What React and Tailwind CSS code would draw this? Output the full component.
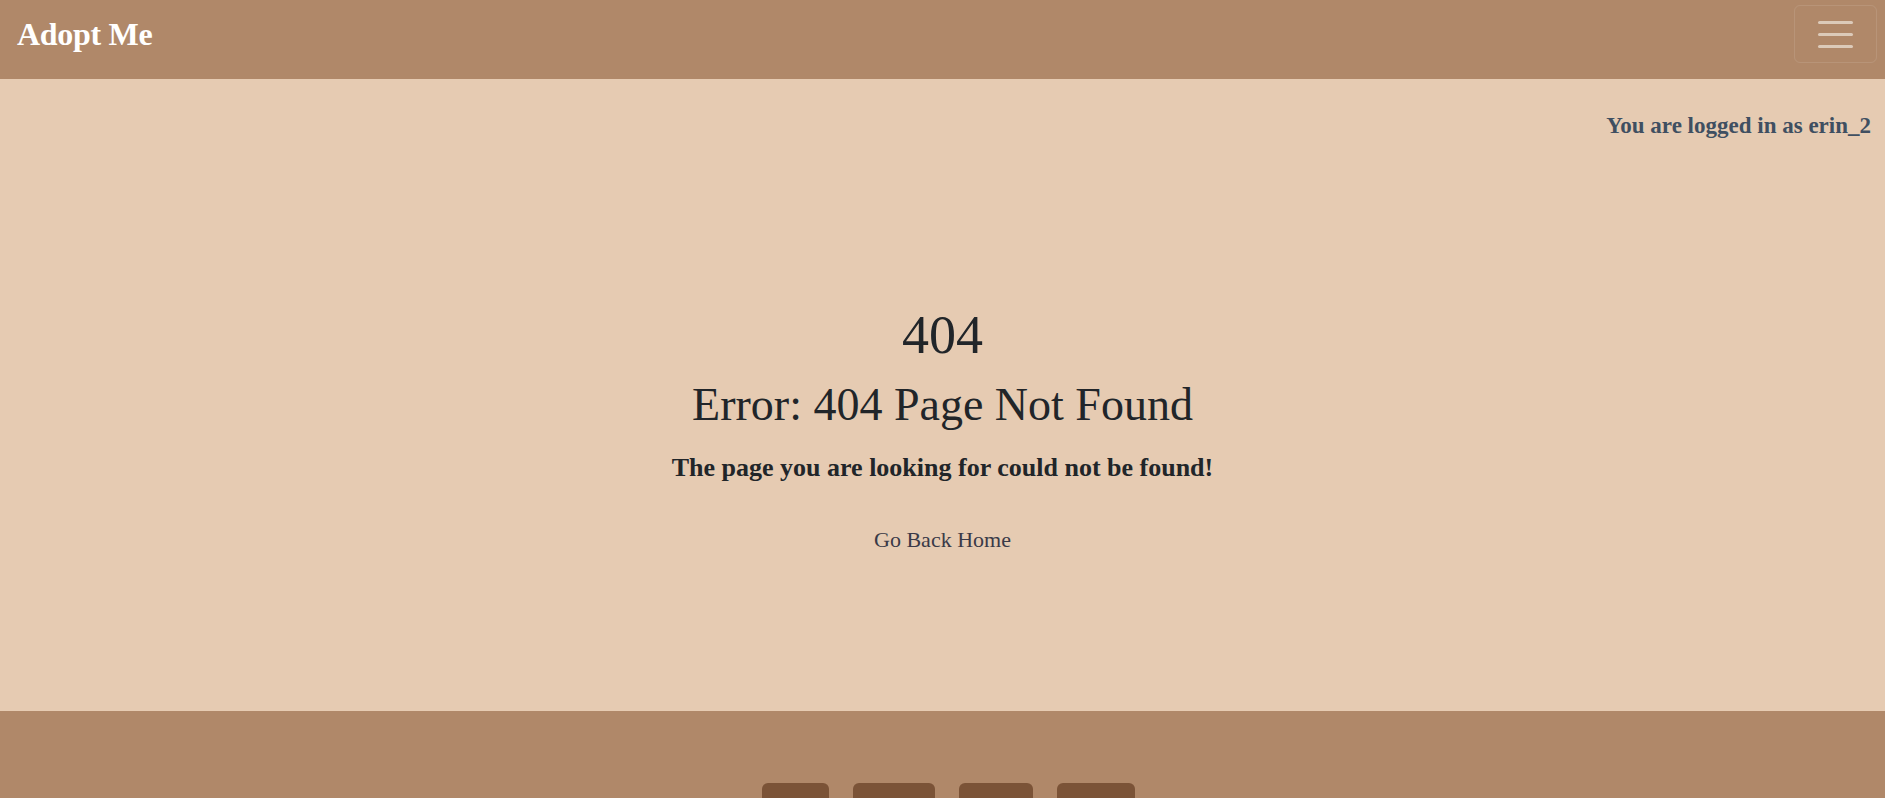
import React from 'react';

const serif = { fontFamily: '"Liberation Serif", "DejaVu Serif", serif' };

const Navbar = () => {
    return (
        <nav className="w-full h-[79px] bg-[#b08869] flex items-center justify-between pl-[17px] pr-[8px] pb-[11px]">
            <a href="#" className="text-white text-[32px] font-bold tracking-[-0.3px]">Adopt Me</a>
            <button className="w-[83px] h-[58px] border border-white/10 rounded-[6px] flex flex-col items-center justify-center gap-[9px]">
                <span className="block w-[35px] h-[3px] bg-[#dccab9] rounded-full"></span>
                <span className="block w-[35px] h-[3px] bg-[#dccab9] rounded-full"></span>
                <span className="block w-[35px] h-[3px] bg-[#dccab9] rounded-full"></span>
            </button>
        </nav>
    );
};

const Footer = () => {
    const links = ['w-[67px]', 'w-[82px]', 'w-[74px]', 'w-[78px]'];
    return (
        <footer className="w-full h-[140px] bg-[#b08869] flex justify-center pt-[72px]">
            <div className="flex gap-[24px] pl-[12px]">
                {links.map((w, i) => (
                    <div key={i} className={`${w} h-[40px] bg-[#7b5337] rounded-[6px]`}></div>
                ))}
            </div>
        </footer>
    );
};

const App = () => {
    return (
        <div className="min-h-screen bg-[#e6cbb2] flex flex-col" style={serif}>
            <Navbar />
            <main className="h-[632px] flex flex-col">
                <div className="flex justify-end pr-[14px] pt-[34px]">
                    <p className="text-[#3f4f61] text-[23px] font-bold leading-[26px]">You are logged in as erin_2</p>
                </div>
                <div className="flex-1 flex flex-col items-center pt-[166px]">
                    <h1 className="text-[#212529] text-[54px] leading-[60px]">404</h1>
                    <h2 className="text-[#212529] text-[46px] leading-[54px] mt-[13px]">Error: 404 Page Not Found</h2>
                    <h4 className="text-[#212529] text-[26px] font-bold leading-[32px] mt-[20px]">The page you are looking for could not be found!</h4>
                    <a href="#" className="text-[#3a3a48] text-[22px] leading-[28px] mt-[42px]">Go Back Home</a>
                </div>
            </main>
            <Footer />
        </div>
    );
};

export default App;
